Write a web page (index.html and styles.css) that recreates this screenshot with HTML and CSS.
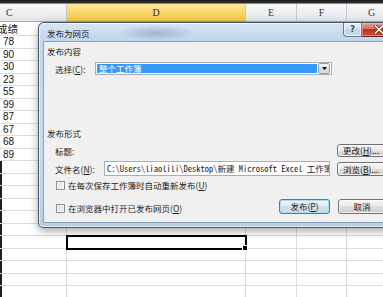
FILE: index.html
```html
<!DOCTYPE html>
<html lang="zh-CN">
<head>
<meta charset="utf-8">
<title>发布为网页</title>
<link rel="stylesheet" href="styles.css">
</head>
<body>
<div class="topbar"></div>
<div class="sheet">
  <div class="row hdr">
    <div class="cell c-col">C</div><div class="cell sel">D</div><div class="cell">E</div><div class="cell">F</div><div class="cell">G</div>
  </div>
  <div class="row first">
    <div class="cell cjk">成绩</div><div class="cell"></div><div class="cell"></div><div class="cell"></div><div class="cell"></div>
  </div>
  <div class="row"><div class="cell">78</div><div class="cell"></div><div class="cell"></div><div class="cell"></div><div class="cell"></div></div>
  <div class="row"><div class="cell">90</div><div class="cell"></div><div class="cell"></div><div class="cell"></div><div class="cell"></div></div>
  <div class="row"><div class="cell">30</div><div class="cell"></div><div class="cell"></div><div class="cell"></div><div class="cell"></div></div>
  <div class="row"><div class="cell">23</div><div class="cell"></div><div class="cell"></div><div class="cell"></div><div class="cell"></div></div>
  <div class="row"><div class="cell">55</div><div class="cell"></div><div class="cell"></div><div class="cell"></div><div class="cell"></div></div>
  <div class="row"><div class="cell">99</div><div class="cell"></div><div class="cell"></div><div class="cell"></div><div class="cell"></div></div>
  <div class="row"><div class="cell">87</div><div class="cell"></div><div class="cell"></div><div class="cell"></div><div class="cell"></div></div>
  <div class="row"><div class="cell">67</div><div class="cell"></div><div class="cell"></div><div class="cell"></div><div class="cell"></div></div>
  <div class="row"><div class="cell">68</div><div class="cell"></div><div class="cell"></div><div class="cell"></div><div class="cell"></div></div>
  <div class="row"><div class="cell">89</div><div class="cell"></div><div class="cell"></div><div class="cell"></div><div class="cell"></div></div>
  <div class="row empty"><div class="cell"></div><div class="cell"></div><div class="cell"></div><div class="cell"></div><div class="cell"></div></div>
  <div class="row empty"><div class="cell"></div><div class="cell"></div><div class="cell"></div><div class="cell"></div><div class="cell"></div></div>
  <div class="row empty"><div class="cell"></div><div class="cell"></div><div class="cell"></div><div class="cell"></div><div class="cell"></div></div>
  <div class="row empty"><div class="cell"></div><div class="cell"></div><div class="cell"></div><div class="cell"></div><div class="cell"></div></div>
  <div class="row empty"><div class="cell"></div><div class="cell"></div><div class="cell"></div><div class="cell"></div><div class="cell"></div></div>
  <div class="row empty"><div class="cell"></div><div class="cell"></div><div class="cell"></div><div class="cell"></div><div class="cell"></div></div>
  <div class="row empty"><div class="cell"></div><div class="cell active"></div><div class="cell"></div><div class="cell"></div><div class="cell"></div></div>
  <div class="row empty"><div class="cell"></div><div class="cell"></div><div class="cell"></div><div class="cell"></div><div class="cell"></div></div>
  <div class="row empty"><div class="cell"></div><div class="cell"></div><div class="cell"></div><div class="cell"></div><div class="cell"></div></div>
  <div class="row empty"><div class="cell"></div><div class="cell"></div><div class="cell"></div><div class="cell"></div><div class="cell"></div></div>
  <div class="row empty"><div class="cell"></div><div class="cell"></div><div class="cell"></div><div class="cell"></div><div class="cell"></div></div>
</div>

<div class="dialog">
  <div class="titlebar">
    <span class="title">发布为网页</span>
    <div class="tb-buttons">
      <span class="tb-help">?</span>
      <span class="tb-close"><svg width="10" height="9" viewBox="0 0 10 9"><path d="M1.5 1 L8.5 8 M8.5 1 L1.5 8" stroke="#5a1a12" stroke-width="3" stroke-linecap="square"/><path d="M1.5 1 L8.5 8 M8.5 1 L1.5 8" stroke="#ffffff" stroke-width="1.6" stroke-linecap="square"/></svg></span>
    </div>
  </div>
  <div class="panel">
    <div class="group">发布内容</div>
    <div class="frow sel-row">
      <span class="lbl lbl-sel">选择(<u>C</u>):</span>
      <div class="select">
        <span class="sel-text">整个工作簿</span>
        <span class="sel-arrow"><svg width="5" height="3" viewBox="0 0 5 3"><path d="M0 0 H5 L2.5 3 Z" fill="#000"/></svg></span>
      </div>
    </div>
    <div class="group group2">发布形式</div>
    <div class="frow title-row">
      <span class="lbl lbl-title">标题:</span>
      <span class="btn btn-side">更改(<u>H</u>)...</span>
    </div>
    <div class="frow file-row">
      <span class="lbl lbl-file">文件名(<u>N</u>):</span>
      <div class="input">C:\Users\liaolili\Desktop\新建 Microsoft Excel 工作簿.htm</div>
      <span class="btn btn-side">浏览(<u>B</u>)...</span>
    </div>
    <div class="frow check-row">
      <span class="check"></span>
      <span class="lbl">在每次保存工作簿时自动重新发布(<u>U</u>)</span>
    </div>
    <div class="frow bottom-row">
      <div class="check-wrap">
        <span class="check"></span>
        <span class="lbl">在浏览器中打开已发布网页(<u>O</u>)</span>
      </div>
      <span class="btn btn-default">发布(<u>P</u>)</span>
      <span class="btn btn-cancel">取消</span>
    </div>
  </div>
</div>
</body>
</html>
```
FILE: styles.css
```css
* { box-sizing: border-box; margin: 0; padding: 0; }
html, body { width: 383px; height: 297px; overflow: hidden; background: #ffffff; }
body { position: relative; font-family: "Liberation Sans", sans-serif; }

.topbar { height: 4px; background: linear-gradient(#1c1c1c 0, #2e2e2e 3px, #8a8a8a 3px); }

.sheet { display: flex; flex-direction: column; }
.row { display: grid; grid-template-columns: 67px 179px 51px 50px 50px; height: 12.5px; flex: none; }
.cell {
  border-right: 1px solid #dadcdd;
  border-bottom: 1px solid #dadcdd;
  font: 10px/12px "Liberation Sans", sans-serif;
  color: #141414;
  padding-left: 3px;
  white-space: nowrap;
  overflow: hidden;
}
.hdr { height: 18px; }
.hdr .cell {
  background: linear-gradient(#f7f8fa, #e3e6ea);
  border-right: 1px solid #c4c8cd;
  border-bottom: 1px solid #a4aeba;
  text-align: center;
  font: 10px/17px "Liberation Serif", serif;
  color: #3a3a3a;
  padding: 0;
}
.hdr .cell.sel { background: linear-gradient(#fde7a0, #f8d462 60%, #f3c648); border-bottom-color: #c9962a; color: #3a3020; }
.hdr .c-col { text-align: left; padding-left: 6px; }
.row.first { height: 14px; }
.cell.cjk { font: 10.5px/14px "Noto Sans CJK SC", sans-serif; text-indent: -6px; }
.empty .cell:first-child { box-shadow: inset 2px 0 0 #1e1e1e; }
.cell.active { position: relative; overflow: visible; outline: 2px solid #000; outline-offset: -1px; z-index: 1; }
.cell.active::after { content: ""; position: absolute; right: -3px; bottom: -3px; width: 4px; height: 4px; background: #000; border: 1px solid #fff; }

/* dialog */
.dialog {
  position: absolute;
  left: 38px; top: 22px;
  width: 364px; height: 206px;
  border: 1px solid rgba(35, 45, 60, 0.75);
  border-radius: 6px 6px 5px 5px;
  background:
    radial-gradient(ellipse 40px 8px at 118px 10px, rgba(90,110,140,0.35), rgba(90,110,140,0) 100%),
    linear-gradient(180deg, #d6e5f4 0, #c0d6ec 18px, #c6d9ee 60%, #b8cfe8 100%);
  box-shadow: 0 3px 8px rgba(0,0,0,0.35), inset 0 0 0 1px rgba(255,255,255,0.6);
  padding: 0 5px 5px 5px;
  display: flex;
  flex-direction: column;
  z-index: 5;
}
.titlebar { height: 19px; display: flex; align-items: flex-start; flex: none; }
.title { padding: 4px 0 0 3px; font: 8.5px/12px "Noto Sans CJK SC", sans-serif; color: #1e1e1e; }
.tb-buttons { margin-left: auto; display: flex; }
.tb-help {
  width: 19px; height: 14px;
  border: 1px solid #6b7a8f; border-top: none;
  border-radius: 0 0 0 4px;
  background: linear-gradient(#e9f0f7, #d2dfed 50%, #bfd1e5 50%, #cbdcee);
  box-shadow: inset 0 0 0 1px rgba(255,255,255,0.6);
  font: bold 8px/13px "DejaVu Sans", sans-serif;
  color: #3c4a5c;
  text-align: center;
}
.tb-close {
  width: 34px; height: 14px;
  border: 1px solid #5a2a24; border-top: none; border-left: none;
  border-radius: 0 0 4px 0;
  background: linear-gradient(#e8a094, #d66a5a 45%, #c2301f 50%, #d04a36);
  box-shadow: inset 0 0 0 1px rgba(255,200,190,0.45);
  display: flex; align-items: center; justify-content: center;
}

.panel {
  flex: 1;
  background: #f0f0f0;
  box-shadow: 0 0 0 1px rgba(120, 140, 170, 0.7);
  display: flex;
  flex-direction: column;
  padding-top: 3px;
  font: 8.5px/12px "Noto Sans CJK SC", sans-serif;
  color: #1b1b1b;
}
.group { height: 12px; padding-left: 3px; flex: none; }
.group2 { margin-top: 52px; }
.frow { display: flex; align-items: center; padding-left: 11px; flex: none; }
.lbl { white-space: nowrap; }
.sel-row { margin-top: 5px; height: 13px; }
.lbl-sel { width: 40px; }
.select {
  width: 237px; height: 13px;
  border: 1px solid #a6adb6;
  background: #fff;
  display: flex;
  padding: 1px;
}
.sel-text { flex: 1; background: #3399ff; color: #fff; padding-left: 2px; font-size: 8.5px; line-height: 9px; }
.sel-arrow {
  width: 12px;
  margin-left: 1px;
  border: 1px solid #9aa0a8;
  border-radius: 2px;
  background: linear-gradient(#f4f4f4, #e6e6e6 50%, #d6d6d6 50%, #dcdcdc);
  display: flex; align-items: center; justify-content: center;
  margin-top: -1px; margin-bottom: -1px;
}

.title-row { margin-top: 5px; height: 13px; }
.lbl-title { width: 282px; }
.btn {
  height: 13px;
  border: 1px solid #707070;
  border-radius: 3px;
  background: linear-gradient(#f3f3f3, #ebebeb 50%, #dddddd 50%, #cfcfcf);
  box-shadow: inset 0 0 0 1px rgba(255,255,255,0.7);
  font: 8.5px/11px "Noto Sans CJK SC", sans-serif;
  color: #1b1b1b;
  white-space: nowrap;
  overflow: hidden;
  text-align: center;
  flex: none;
}
.btn-side { width: 56px; padding-left: 5px; text-align: left; }
.file-row { margin-top: 4px; height: 15px; }
.lbl-file { width: 49px; }
.input {
  width: 226px; height: 15px;
  border: 1px solid #abadb3;
  background: #fff;
  font: 8.5px/13px "Noto Sans Mono CJK SC", "Liberation Mono", "Noto Sans CJK SC", monospace;
  color: #1b1b1b;
  padding-left: 2px;
  white-space: nowrap;
  overflow: hidden;
}
.file-row .btn-side { margin-left: 7px; height: 14px; line-height: 12px; }

.check {
  width: 9px; height: 9px;
  border: 1px solid #8e8f8f;
  background: linear-gradient(135deg, #dcdcdc, #f6f6f6);
  box-shadow: inset 0 0 0 1px #f4f4f4;
  margin-left: 1px;
  margin-right: 3px;
  flex: none;
}
.check-row { margin-top: 4px; height: 10px; }
.bottom-row { margin-top: 9px; height: 15px; }
.check-wrap { width: 224px; display: flex; align-items: center; padding-top: 3px; }
.btn-default {
  width: 51px; height: 15px; line-height: 13px;
  border-color: #3c7fb1;
  box-shadow: inset 0 0 0 1px #a9dcf6;
  background: linear-gradient(#eef3f6, #e4ebf0 50%, #d5dee5 50%, #ccd7e0);
}
.btn-cancel { width: 48px; height: 15px; line-height: 13px; margin-left: 8px; }
```
